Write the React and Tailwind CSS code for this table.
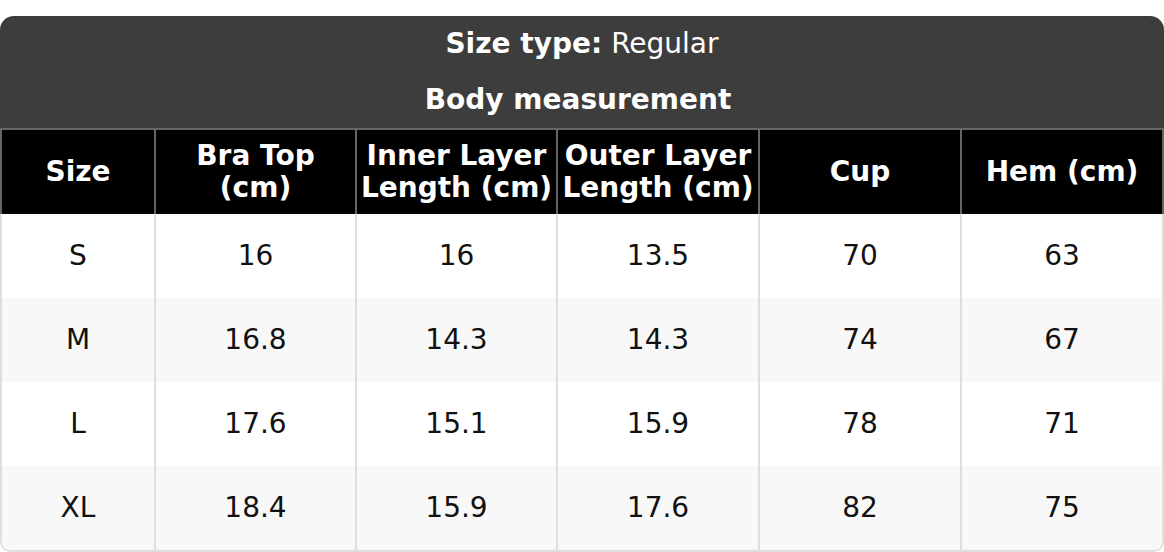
const headers = [
  ["Size"],
  ["Bra Top", "(cm)"],
  ["Inner Layer", "Length (cm)"],
  ["Outer Layer", "Length (cm)"],
  ["Cup"],
  ["Hem (cm)"],
];

const rows = [
  ["S", "16", "16", "13.5", "70", "63"],
  ["M", "16.8", "14.3", "14.3", "74", "67"],
  ["L", "17.6", "15.1", "15.9", "78", "71"],
  ["XL", "18.4", "15.9", "17.6", "82", "75"],
];

function App() {
  return (
    <div
      className="bg-white w-[1164px] h-[552px] pt-[16px]"
      style={{ fontFamily: '"DejaVu Sans", "Liberation Sans", sans-serif' }}
    >
      <div className="rounded-t-[14px] rounded-b-[10px] overflow-hidden">
        <div className="bg-[#3d3d3d] text-white text-[28px] leading-[32px]">
          <div className="h-[55px] flex items-center justify-center">
            <span className="font-bold">Size type:</span>
            <span className="ml-[9px]">Regular</span>
          </div>
          <div className="h-[57px] flex items-center justify-center font-bold">
            <span className="mr-[8px]">Body measurement</span>
          </div>
        </div>

        <div className="grid grid-cols-[152px_201px_201px_202px_202px_202px] bg-black border-t-2 border-x-2 border-[#666] text-white font-bold text-[28px] leading-[32px]">
          {headers.map((h, i) => (
            <div
              key={i}
              className={
                "h-[84px] flex flex-col items-center justify-center text-center whitespace-nowrap " +
                (i > 0 ? "border-l-2 border-[#666]" : "")
              }
            >
              {h.map((line) => (
                <span key={line}>{line}</span>
              ))}
            </div>
          ))}
        </div>

        <div className="border-x-2 border-b-2 border-[#dedede] rounded-b-[10px] overflow-hidden text-[#111] text-[28px] leading-[32px]">
          {rows.map((r, ri) => (
            <div
              key={ri}
              className={
                "grid grid-cols-[152px_201px_201px_202px_202px_202px] " +
                (ri % 2 === 1 ? "bg-[#f8f8f8]" : "bg-white")
              }
            >
              {r.map((v, ci) => (
                <div
                  key={ci}
                  className={
                    "h-[84px] flex items-center justify-center " +
                    (ci > 0 ? "border-l-2 border-[#dedede]" : "")
                  }
                >
                  {v}
                </div>
              ))}
            </div>
          ))}
        </div>
      </div>
    </div>
  );
}

export default App;
